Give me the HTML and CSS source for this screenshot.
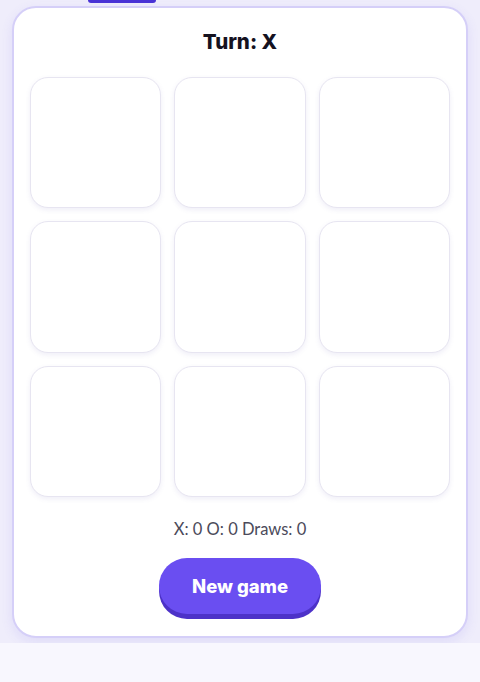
FILE: index.html
```html
<!DOCTYPE html>
<html lang="en">
<head>
<meta charset="utf-8">
<title>Tic Tac Toe</title>
<link rel="stylesheet" href="styles.css">
</head>
<body>
<div class="page">
  <div class="tab"></div>
  <main class="card">
    <h1 class="turn">Turn: X</h1>
    <div class="board">
      <button class="cell"></button>
      <button class="cell"></button>
      <button class="cell"></button>
      <button class="cell"></button>
      <button class="cell"></button>
      <button class="cell"></button>
      <button class="cell"></button>
      <button class="cell"></button>
      <button class="cell"></button>
    </div>
    <p class="score">X: 0 O: 0 Draws: 0</p>
    <button class="new-game">New game</button>
  </main>
</div>
</body>
</html>
```
FILE: styles.css
```css
html {
  background: #f8f7fe;
}
body {
  margin: 0;
  font-family: Lato, "Noto Sans", sans-serif;
}
.page {
  background: #efedfb;
  padding: 0 12px 5px;
}
.tab {
  margin-left: 76px;
  width: 68px;
  height: 3px;
  background: #4a33d6;
  border-radius: 0 0 6px 6px;
}
.card {
  margin-top: 3px;
  background: #ffffff;
  border: 2px solid #d5cff8;
  border-radius: 24px;
  box-shadow: 0 4px 12px rgba(108, 90, 230, 0.12);
  padding: 20px 16px 17px;
  display: flex;
  flex-direction: column;
  align-items: center;
}
.turn {
  margin: 0;
  font-family: Inter, "DejaVu Sans", sans-serif;
  font-weight: 800;
  font-size: 20.5px;
  line-height: 28px;
  color: #15121f;
}
.board {
  margin-top: 21px;
  width: 100%;
  display: grid;
  grid-template-columns: repeat(3, 1fr);
  gap: 13px;
}
.cell {
  aspect-ratio: 1;
  background: #ffffff;
  border: 1px solid #e7e5f1;
  border-radius: 18px;
  box-shadow: 0 2px 5px rgba(100, 90, 180, 0.1);
  padding: 0;
}
.score {
  margin: 21px 0 0;
  font-size: 16.5px;
  line-height: 22px;
  color: #4b4a5a;
}
.new-game {
  margin-top: 18px;
  width: 162px;
  height: 56px;
  border: none;
  border-radius: 28px;
  background: #6a4ef1;
  box-shadow: 0 5px 0 #4d32c8;
  color: #ffffff;
  font-family: Inter, "DejaVu Sans", sans-serif;
  font-weight: 800;
  font-size: 18.5px;
  margin-bottom: 5px;
}
```
